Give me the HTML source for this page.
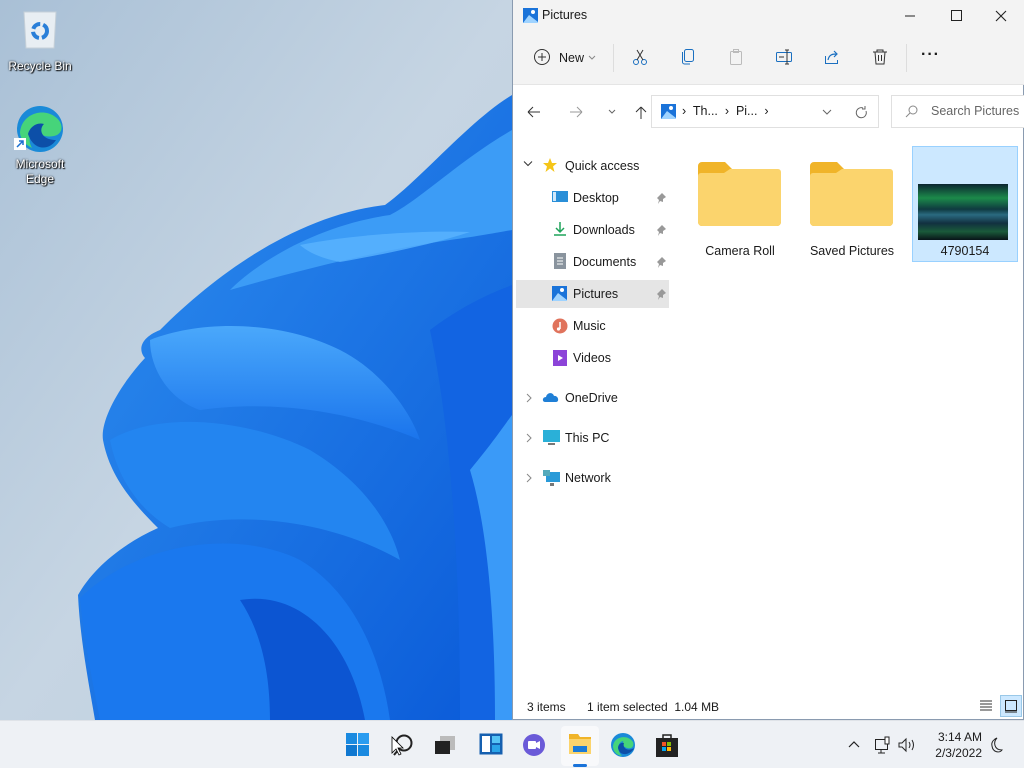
<!DOCTYPE html>
<html><head><meta charset="utf-8">
<style>
*{box-sizing:border-box;margin:0;padding:0}
body{width:1024px;height:768px;overflow:hidden;position:relative;font-family:"Liberation Sans",sans-serif;font-size:12px;color:#1a1a1a;background:#bccddd}
.abs{position:absolute}
.dtxt{color:#fff;font-size:12px;text-align:center;text-shadow:0 0 2px #000,1px 1px 1px #000;line-height:15px}
.win{left:512px;top:0;width:512px;height:720px;background:#fff;border:1px solid #8a9bb0;border-top:none}
.nav div.it{position:absolute;height:28px;line-height:28px;font-size:12.5px}
.tb svg{position:absolute}
</style></head><body>
<svg class="abs" style="left:0;top:0" width="512" height="720" viewBox="0 0 512 720">
<defs>
<linearGradient id="bg" x1="0" y1="0" x2="1" y2="1"><stop offset="0" stop-color="#a9c0d6"/><stop offset="0.5" stop-color="#c6d5e3"/><stop offset="1" stop-color="#bccddd"/></linearGradient>
<linearGradient id="b1" x1="0" y1="0" x2="1" y2="1"><stop offset="0" stop-color="#2f90f0"/><stop offset="1" stop-color="#0a5ad8"/></linearGradient>
<linearGradient id="b2" x1="0" y1="0" x2="0" y2="1"><stop offset="0" stop-color="#4aa8fb"/><stop offset="1" stop-color="#1a74ec"/></linearGradient>
</defs>
<rect width="512" height="720" fill="url(#bg)"/>
<path d="M512 95 C470 120 420 180 385 205 C300 215 220 270 160 330 C140 338 138 350 145 358 C120 385 100 420 103 440 C110 478 135 505 158 528 C120 545 92 570 78 595 C80 640 90 690 95 720 L512 720Z" fill="url(#b1)"/>
<path d="M512 130 C460 160 420 200 390 215 C320 225 260 260 230 290 C300 270 380 250 450 240 C480 236 500 232 512 230Z" fill="#3c9cf6"/>
<path d="M150 340 C200 320 280 320 340 350 C380 370 410 410 420 440 C350 410 270 400 200 410 C170 400 150 370 150 340Z" fill="url(#b2)"/>
<path d="M110 440 C160 410 250 420 310 450 C360 480 390 520 400 560 C330 520 240 510 170 528 C140 510 118 480 110 440Z" fill="#2385f0"/>
<path d="M80 598 C140 540 240 530 300 560 C350 590 380 650 390 720 L100 720 C92 680 84 640 80 598Z" fill="#1a78ee"/>
<path d="M240 600 C300 590 350 640 365 720 L270 720 C270 670 260 630 240 600Z" fill="#0c55d2"/>
<path d="M430 330 C470 300 500 290 512 285 L512 720 L460 720 C460 600 455 450 430 330Z" fill="#1264e2"/>
<path d="M470 470 C495 440 508 420 512 415 L512 720 L495 720 C495 620 488 530 470 470Z" fill="#3a9af8"/>
<path d="M300 245 C350 235 420 230 470 232 C430 245 380 255 340 262 C320 258 308 252 300 245Z" fill="#5ab4ff" opacity="0.8"/>
</svg>
<svg class="abs" style="left:22px;top:10px" width="36" height="40"><path d="M2 2 H34 L32 38 H4 Z" fill="#e8eef3" stroke="#c6d0d8"/><circle cx="18" cy="21" r="7" fill="none" stroke="#2a7fd8" stroke-width="4" stroke-dasharray="9 3"/></svg>
<div class="abs dtxt" style="left:2px;top:59px;width:76px">Recycle Bin</div>
<svg class="abs" style="left:14px;top:104px" width="52" height="50"><circle cx="26" cy="25" r="23" fill="#1a8ad8"/><path d="M6 28 C8 10 28 4 40 12 C50 18 50 30 40 32 C30 34 22 30 26 22 C18 22 12 34 18 44 C10 40 6 34 6 28Z" fill="#46d47a"/><path d="M14 30 C16 22 24 18 30 20 C24 26 28 36 42 36 C36 46 20 48 14 30Z" fill="#0c4fa8"/><rect x="0" y="34" width="12" height="12" fill="#fff"/><path d="M3 43 L9 37 M5 37 H9 V41" stroke="#1a6fd0" stroke-width="1.5" fill="none"/></svg>
<div class="abs dtxt" style="left:2px;top:157px;width:76px">Microsoft<br>Edge</div>

<div class="abs win">
 <div class="abs" style="left:0;top:0;width:511px;height:84px;background:#f3f3f3"></div>
 <div class="abs" style="left:0;top:84px;width:511px;height:1px;background:#e5e5e5"></div>
 <svg class="abs" style="left:10px;top:8px" width="15" height="15"><rect width="15" height="15" fill="#1a73d9"/><path d="M0 15 L6 7 L15 14 V15Z" fill="#9fd3ff"/><circle cx="10" cy="4" r="2" fill="#fff"/></svg>
 <div class="abs" style="left:29px;top:8px;font-size:12.5px">Pictures</div>
 <svg class="abs" style="left:390px;top:8px" width="110" height="16"><path d="M2 8 H12" stroke="#222"/><rect x="48.5" y="2.5" width="10" height="10" fill="none" stroke="#222"/><path d="M93 3 L103 13 M103 3 L93 13" stroke="#222" stroke-width="1.1"/></svg>
 <div class="tb">
 <svg style="left:20px;top:48px" width="18" height="18"><circle cx="9" cy="9" r="7.5" fill="none" stroke="#333"/><path d="M9 5V13M5 9H13" stroke="#333"/></svg>
 <div class="abs" style="left:46px;top:51px;font-size:12.5px">New</div>
 <svg style="left:75px;top:55px" width="8" height="6"><path d="M1 1 L4 4 L7 1" stroke="#888" fill="none"/></svg>
 <div class="abs" style="left:100px;top:44px;width:1px;height:28px;background:#ddd"></div>
 <svg style="left:118px;top:48px" width="18" height="18"><circle cx="5" cy="14" r="2.5" fill="none" stroke="#1a6fc0"/><circle cx="13" cy="14" r="2.5" fill="none" stroke="#1a6fc0"/><path d="M6 12 L12 2 M12 12 L6 2" stroke="#333"/></svg>
 <svg style="left:166px;top:48px" width="18" height="18"><rect x="5.5" y="1.5" width="9" height="12" rx="2" fill="none" stroke="#1a6fc0"/><path d="M3.5 4 V14 a2 2 0 0 0 2 2 H11" fill="none" stroke="#1a6fc0"/></svg>
 <svg style="left:214px;top:48px" width="18" height="18"><rect x="3.5" y="3.5" width="11" height="13" rx="1" fill="none" stroke="#bbb"/><rect x="6.5" y="1.5" width="5" height="3" fill="none" stroke="#bbb"/></svg>
 <svg style="left:262px;top:48px" width="18" height="18"><rect x="1.5" y="4.5" width="15" height="9" rx="1" fill="none" stroke="#1a6fc0"/><path d="M4 9 H9 M12 2 V16 M10 2H14 M10 16H14" stroke="#333"/></svg>
 <svg style="left:310px;top:48px" width="18" height="18"><path d="M2.5 8 V15.5 H14.5 V12" fill="none" stroke="#1a6fc0"/><path d="M5 12 C6 7 9 6 13 6 M11 3 L14 6 L11 9" fill="none" stroke="#1a6fc0" stroke-width="1.2"/></svg>
 <svg style="left:358px;top:48px" width="18" height="18"><path d="M2 4 H16 M6 4 V2 H12 V4 M4 4 L5 16 H13 L14 4 M7.5 7 V13 M10.5 7 V13" fill="none" stroke="#333"/></svg>
 <div class="abs" style="left:393px;top:44px;width:1px;height:28px;background:#ddd"></div>
 <div class="abs" style="left:408px;top:46px;font-size:16px;font-weight:bold;letter-spacing:1px">···</div>
 <svg style="left:12px;top:104px" width="124" height="16"><path d="M3 8 H15 M3 8 L8 3 M3 8 L8 13" stroke="#333" fill="none"/><path d="M45 8 H57 M57 8 L52 3 M57 8 L52 13" stroke="#999" fill="none"/><path d="M84 6 L87 9 L90 6" stroke="#666" fill="none"/><path d="M116 3 V15 M116 3 L111 8 M116 3 L121 8" stroke="#333" fill="none"/></svg>
 </div>
 <div class="abs" style="left:138px;top:95px;width:228px;height:33px;border:1px solid #e0e0e0;background:#fff"></div>
 <svg class="abs" style="left:148px;top:104px" width="15" height="15"><rect width="15" height="15" fill="#1a73d9"/><path d="M0 15 L6 7 L15 14 V15Z" fill="#9fd3ff"/><circle cx="10" cy="4" r="2" fill="#fff"/></svg>
 <div class="abs" style="left:169px;top:104px;font-size:12.5px">›&nbsp; Th... &nbsp;›&nbsp; Pi... &nbsp;›</div>
 <svg class="abs" style="left:308px;top:104px" width="50" height="16"><path d="M2 6 L6 10 L10 6" stroke="#666" fill="none"/><path d="M42 4 A5 5 0 1 0 45 7 M44 2 V5 H41" stroke="#666" fill="none"/></svg>
 <div class="abs" style="left:378px;top:95px;width:134px;height:33px;border:1px solid #e0e0e0;background:#fff"></div>
 <svg class="abs" style="left:392px;top:104px" width="14" height="14"><circle cx="8" cy="6" r="4" fill="none" stroke="#888"/><path d="M5 9 L1 13" stroke="#888"/></svg>
 <div class="abs" style="left:418px;top:104px;font-size:12.5px;color:#666">Search Pictures</div>
 <div class="nav">
 <div class="abs" style="left:3px;top:280px;width:153px;height:28px;background:#e5e5e5"></div>
 <svg class="abs" style="left:10px;top:160px" width="10" height="8"><path d="M1 1.5 L5 5.5 L9 1.5" stroke="#333" fill="none"/></svg>
 <svg class="abs" style="left:29px;top:157px" width="16" height="16"><path d="M8 1 L10 6 L15 6 L11 9.5 L12.5 15 L8 11.5 L3.5 15 L5 9.5 L1 6 L6 6Z" fill="#f5c518"/></svg>
 <div class="it" style="left:52px;top:152px">Quick access</div>
 <svg class="abs" style="left:39px;top:190px" width="16" height="14"><rect y="1" width="16" height="11" fill="#2a8fd8"/><rect x="1" y="2" width="3" height="9" fill="#d0e8fa"/></svg>
 <div class="it" style="left:60px;top:184px">Desktop</div>
 <svg class="abs" style="left:39px;top:221px" width="16" height="16"><path d="M8 1 V11 M4 7 L8 11 L12 7 M2 14 H14" stroke="#1fa35a" stroke-width="1.5" fill="none"/></svg>
 <div class="it" style="left:60px;top:216px">Downloads</div>
 <svg class="abs" style="left:41px;top:253px" width="12" height="16"><rect width="12" height="16" fill="#8a949e"/><path d="M3 5H9M3 8H9M3 11H9" stroke="#fff"/></svg>
 <div class="it" style="left:60px;top:248px">Documents</div>
 <svg class="abs" style="left:39px;top:286px" width="15" height="15"><rect width="15" height="15" fill="#1a73d9"/><path d="M0 15 L6 7 L15 14 V15Z" fill="#9fd3ff"/><circle cx="10" cy="4" r="2" fill="#fff"/></svg>
 <div class="it" style="left:60px;top:280px">Pictures</div>
 <svg class="abs" style="left:39px;top:318px" width="16" height="16"><circle cx="8" cy="8" r="7.5" fill="#e0735c"/><path d="M8 4 V11" stroke="#fff" stroke-width="1.5"/><circle cx="6.5" cy="11" r="1.6" fill="#fff"/></svg>
 <div class="it" style="left:60px;top:312px">Music</div>
 <svg class="abs" style="left:40px;top:350px" width="14" height="16"><rect width="14" height="16" fill="#8c44d8"/><path d="M5 5 L10 8 L5 11Z" fill="#fff"/></svg>
 <div class="it" style="left:60px;top:344px">Videos</div>
 <svg class="abs" style="left:144px;top:193px" width="10" height="140" fill="#999"><path d="M5 0 L9 4 L6 6 L6 9 L3 8 L1 11 L2 7 L0 5Z M5 32 L9 36 L6 38 L6 41 L3 40 L1 43 L2 39 L0 37Z M5 64 L9 68 L6 70 L6 73 L3 72 L1 75 L2 71 L0 69Z M5 96 L9 100 L6 102 L6 105 L3 104 L1 107 L2 103 L0 101Z"/></svg>
 <svg class="abs" style="left:12px;top:393px" width="8" height="90"><path d="M2 1 L6 5 L2 9 M2 41 L6 45 L2 49 M2 81 L6 85 L2 89" stroke="#888" fill="none"/></svg>
 <svg class="abs" style="left:29px;top:391px" width="18" height="12"><path d="M3 11 C0 11 0 6 4 6 C5 1 11 1 12 5 C16 4 18 11 14 11Z" fill="#1f7fd6"/></svg>
 <div class="it" style="left:52px;top:384px">OneDrive</div>
 <svg class="abs" style="left:30px;top:430px" width="17" height="16"><rect width="17" height="12" fill="#2ab0d8"/><rect x="5" y="13" width="7" height="2" fill="#777"/></svg>
 <div class="it" style="left:52px;top:424px">This PC</div>
 <svg class="abs" style="left:30px;top:470px" width="17" height="16"><rect x="3" y="2" width="14" height="10" fill="#2a9ad8"/><rect x="0" y="0" width="7" height="6" fill="#5ab"/><rect x="7" y="13" width="4" height="3" fill="#777"/></svg>
 <div class="it" style="left:52px;top:464px">Network</div>
 </div>
 <svg class="abs" style="left:184px;top:160px" width="86" height="68"><path d="M1 6 a4 4 0 0 1 4 -4 H28 L36 10 H80 a4 4 0 0 1 4 4 V62 a4 4 0 0 1 -4 4 H5 a4 4 0 0 1 -4 -4Z" fill="#f0b429"/><path d="M1 16 a3 3 0 0 1 3 -3 H27 L33 9 H81 a3 3 0 0 1 3 3 V62 a4 4 0 0 1 -4 4 H5 a4 4 0 0 1 -4 -4Z" fill="#fbd46d"/></svg>
 <div class="abs" style="left:166px;top:244px;width:122px;text-align:center;font-size:12.5px">Camera Roll</div>
 <svg class="abs" style="left:296px;top:160px" width="86" height="68"><path d="M1 6 a4 4 0 0 1 4 -4 H28 L36 10 H80 a4 4 0 0 1 4 4 V62 a4 4 0 0 1 -4 4 H5 a4 4 0 0 1 -4 -4Z" fill="#f0b429"/><path d="M1 16 a3 3 0 0 1 3 -3 H27 L33 9 H81 a3 3 0 0 1 3 3 V62 a4 4 0 0 1 -4 4 H5 a4 4 0 0 1 -4 -4Z" fill="#fbd46d"/></svg>
 <div class="abs" style="left:278px;top:244px;width:122px;text-align:center;font-size:12.5px">Saved Pictures</div>
 <div class="abs" style="left:399px;top:146px;width:106px;height:116px;background:#cce8ff;border:1px solid #99d1ff"></div>
 <div class="abs" style="left:405px;top:184px;width:90px;height:56px;background:linear-gradient(180deg,#0b2530 0%,#1c8a4a 25%,#0f3a40 45%,#2a6a80 55%,#123040 70%,#1a5a3a 85%,#081418 100%)"></div>
 <div class="abs" style="left:399px;top:244px;width:106px;text-align:center;font-size:12.5px">4790154</div>
 <div class="abs" style="left:14px;top:700px;font-size:12px">3 items</div>
 <div class="abs" style="left:74px;top:700px;font-size:12px">1 item selected&nbsp; 1.04 MB</div>
 <svg class="abs" style="left:466px;top:699px" width="14" height="14"><path d="M1 2H13M1 5H13M1 8H13M1 11H13" stroke="#333"/></svg>
 <div class="abs" style="left:487px;top:695px;width:22px;height:22px;background:#cce8ff;border:1px solid #99c8e8"></div>
 <svg class="abs" style="left:491px;top:699px" width="14" height="14"><rect x="1.5" y="1.5" width="11" height="10" fill="none" stroke="#222"/><path d="M1 13H13" stroke="#222"/></svg>
</div>
<div class="abs" style="left:0;top:720px;width:1024px;height:48px;background:#eef1f5;border-top:1px solid #dfe3e8"></div>
<svg class="abs" style="left:346px;top:733px" width="24" height="24"><rect x="0" y="0" width="11" height="11" fill="#1a8ae0"/><rect x="12" y="0" width="11" height="11" fill="#2a9cf0"/><rect x="0" y="12" width="11" height="11" fill="#1078d0"/><rect x="12" y="12" width="11" height="11" fill="#1a8ae0"/></svg>
<svg class="abs" style="left:390px;top:733px" width="26" height="26"><circle cx="14" cy="10" r="7.5" fill="none" stroke="#222" stroke-width="2"/><path d="M9 16 L4 22" stroke="#222" stroke-width="2"/><path d="M2 4 V20 L6 16 L9 22 L11 21 L8 15 H13Z" fill="#fff" stroke="#000" stroke-width="0.8"/></svg>
<svg class="abs" style="left:434px;top:735px" width="22" height="20"><rect x="6" y="1" width="15" height="14" fill="#bbb"/><rect x="1" y="6" width="15" height="13" fill="#222"/></svg>
<svg class="abs" style="left:479px;top:733px" width="24" height="22"><rect x="0.5" y="0.5" width="23" height="21" fill="#1560b0"/><rect x="3" y="3" width="8" height="16" fill="#fff"/><rect x="13" y="3" width="8" height="7" fill="#56c4f5"/><rect x="13" y="12" width="8" height="7" fill="#2aa4e8"/></svg>
<svg class="abs" style="left:522px;top:733px" width="24" height="24"><circle cx="12" cy="12" r="11" fill="#6a5ad8"/><rect x="6" y="8" width="8" height="8" rx="1" fill="#fff"/><path d="M14 10 L18 8 V16 L14 14Z" fill="#fff"/></svg>
<div class="abs" style="left:561px;top:726px;width:38px;height:40px;background:#f8f9fb;border-radius:4px"></div>
<svg class="abs" style="left:568px;top:732px" width="24" height="24"><path d="M1 2 H10 L12 5 H23 V22 H1Z" fill="#f0b429"/><rect x="1" y="7" width="22" height="15" fill="#fbd46d"/><rect x="5" y="14" width="14" height="6" fill="#1a7ad8"/></svg>
<div class="abs" style="left:573px;top:764px;width:14px;height:3px;background:#1a73d9;border-radius:2px"></div>
<svg class="abs" style="left:610px;top:732px" width="26" height="26"><circle cx="13" cy="13" r="12" fill="#1a8ad8"/><path d="M3 14 C4 4 18 2 23 10 C25 16 19 18 15 15 C11 13 13 9 14 9 C8 9 6 18 12 24 C6 23 3 19 3 14Z" fill="#46d47a"/><path d="M8 16 C8 12 12 10 14 11 C12 16 18 20 24 16 C22 22 10 26 8 16Z" fill="#0c4fa8"/></svg>
<svg class="abs" style="left:655px;top:732px" width="24" height="26"><path d="M8 6 V3 H16 V6" fill="none" stroke="#222" stroke-width="1.5"/><rect x="1" y="6" width="22" height="19" fill="#222"/><rect x="7" y="10" width="4" height="4" fill="#f35325"/><rect x="12" y="10" width="4" height="4" fill="#81bc06"/><rect x="7" y="15" width="4" height="4" fill="#05a6f0"/><rect x="12" y="15" width="4" height="4" fill="#ffba08"/></svg>
<svg class="abs" style="left:846px;top:736px" width="72" height="18"><path d="M3 11 L8 6 L13 11" stroke="#222" fill="none" stroke-width="1.2"/><rect x="29.5" y="3.5" width="12" height="10" fill="none" stroke="#222"/><rect x="39" y="1" width="4" height="7" fill="#fff" stroke="#222"/><path d="M35 14 V17 M32 17 H39" stroke="#222"/><path d="M53 7 H56 L60 3 V15 L56 11 H53Z" fill="none" stroke="#222"/><path d="M63 6 Q65 9 63 12 M66 4 Q69 9 66 14" stroke="#222" fill="none"/></svg>
<div class="abs" style="left:918px;top:729px;width:64px;text-align:right;font-size:12px;line-height:16px">3:14 AM<br>2/3/2022</div>
<svg class="abs" style="left:990px;top:736px" width="16" height="18"><path d="M7 2 C3 6 4 14 12 14 C10 17 3 17 2 10 C1 6 4 3 7 2Z" fill="none" stroke="#222"/></svg>
</body></html>
